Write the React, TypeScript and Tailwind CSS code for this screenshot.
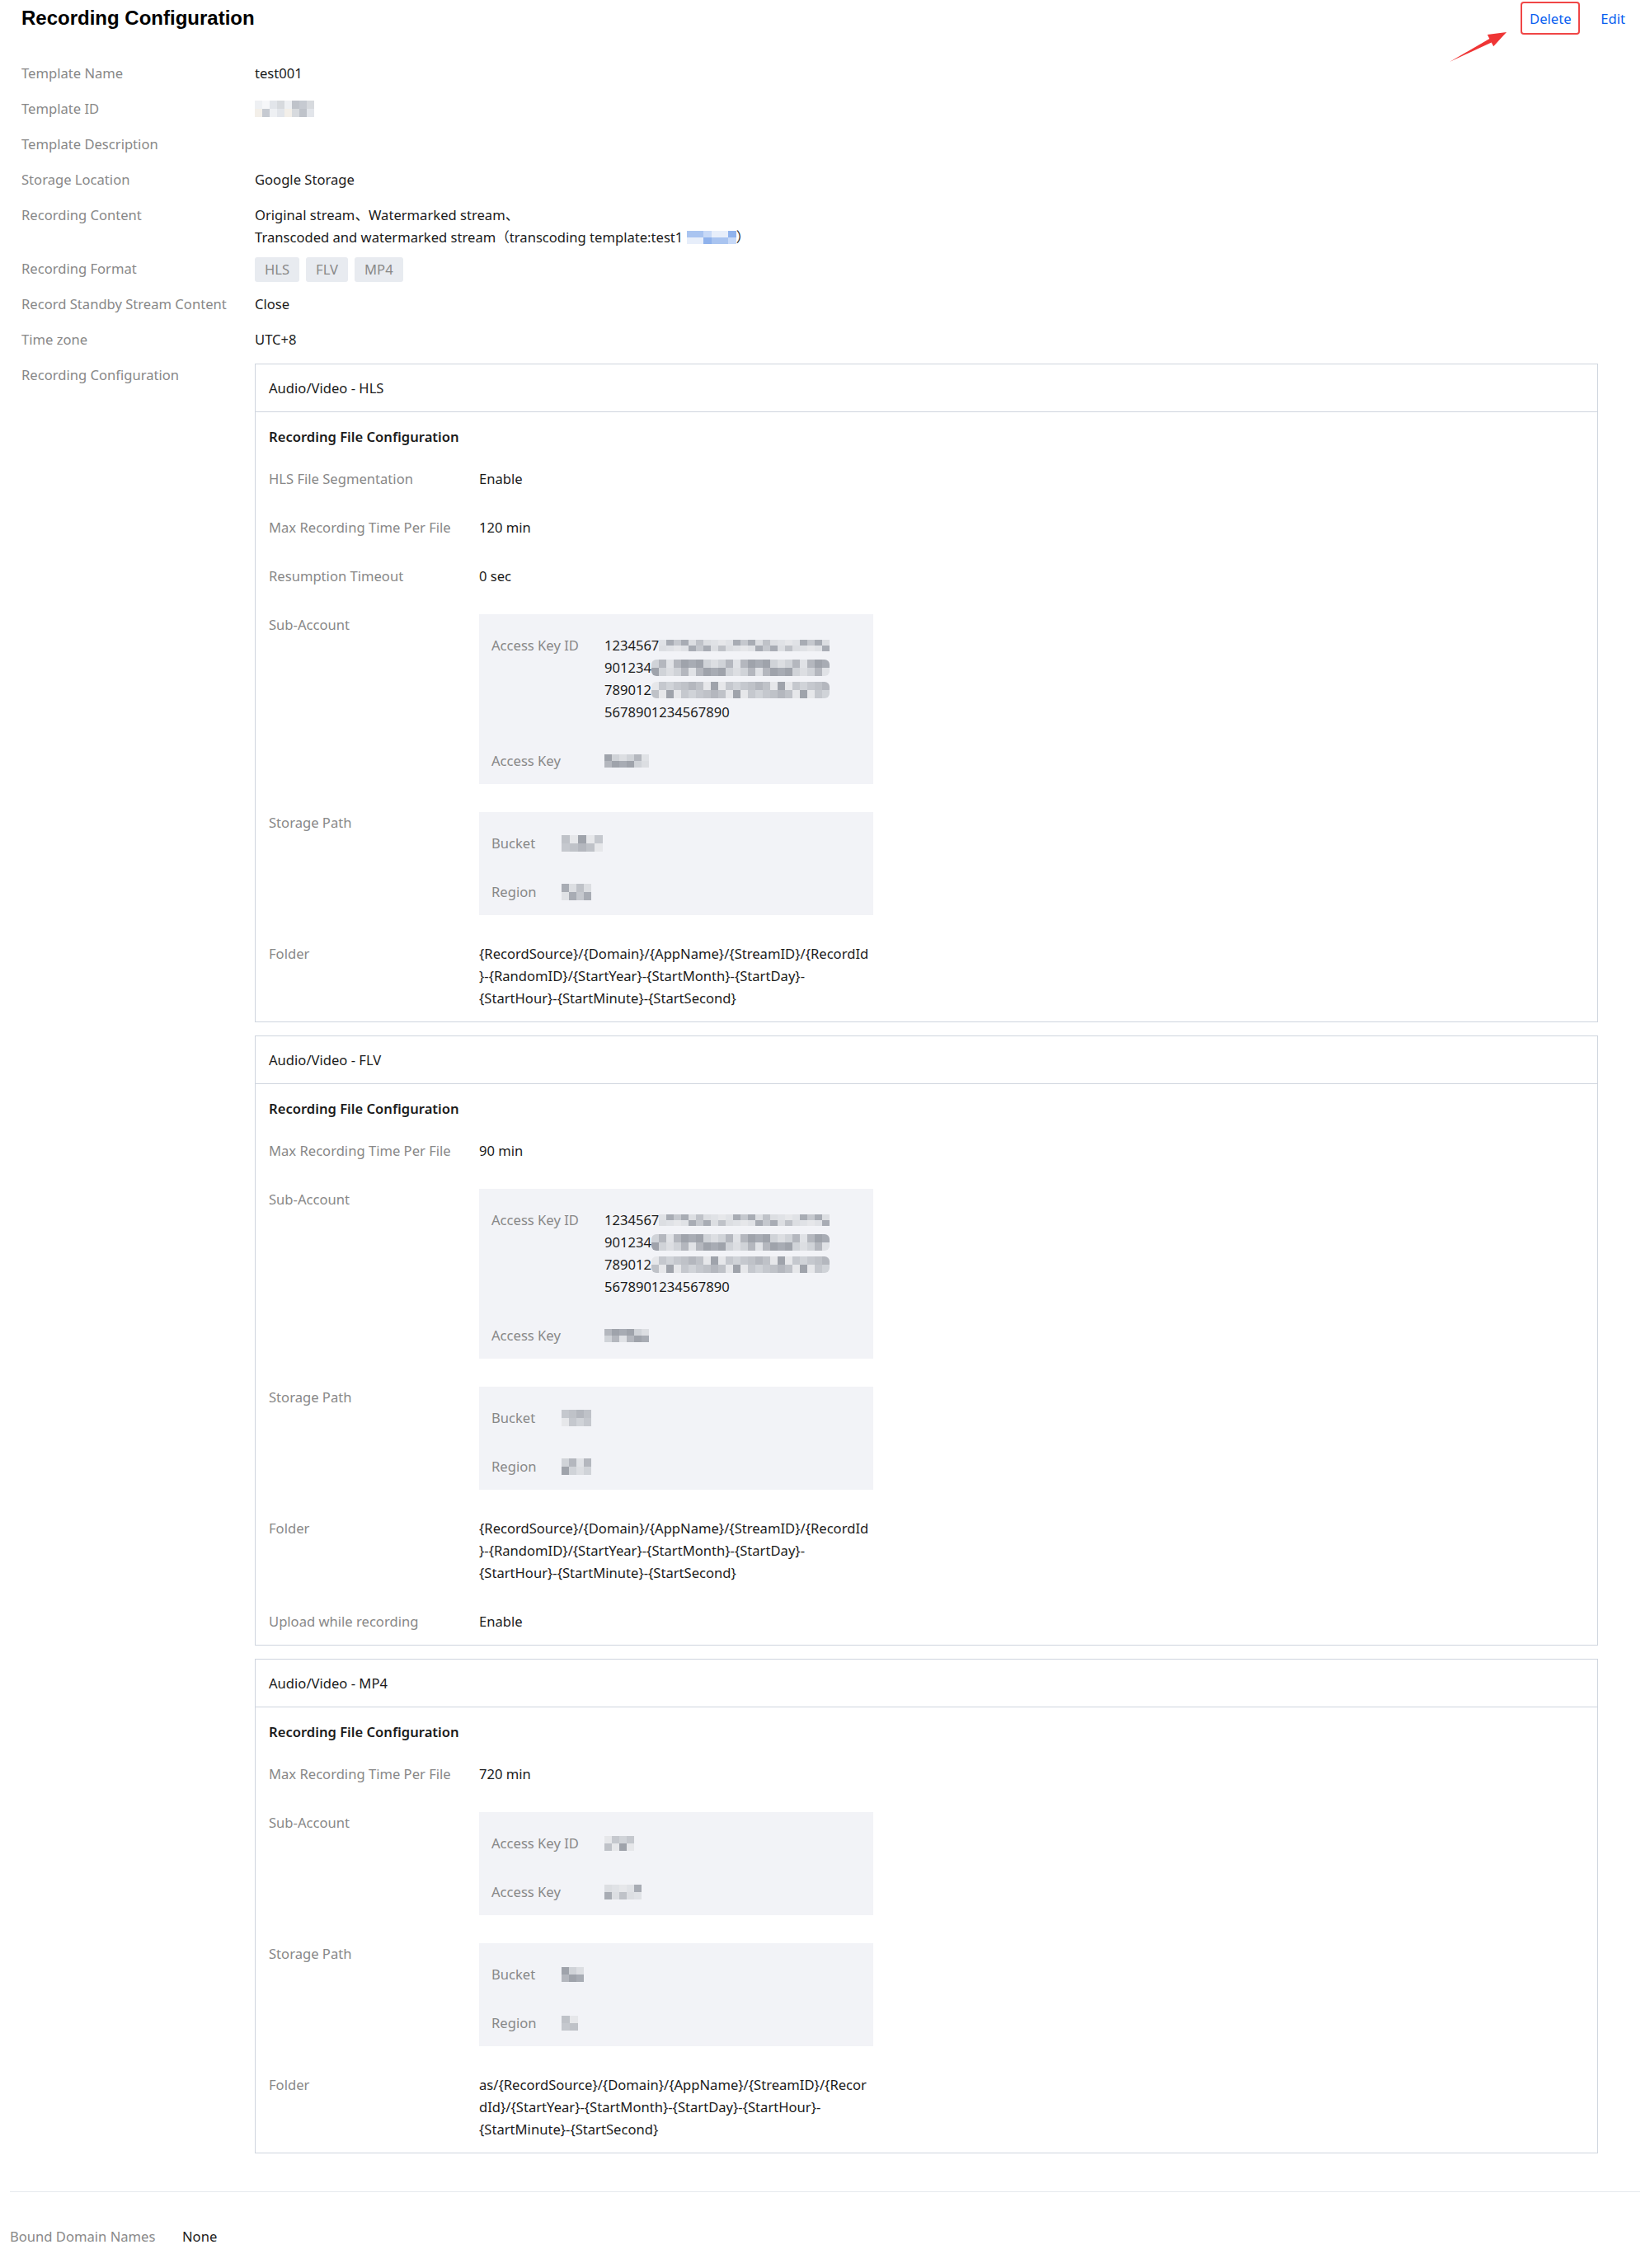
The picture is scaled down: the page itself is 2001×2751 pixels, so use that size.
import React from "react";

const greys = [
  "bg-[#c5c8ce]",
  "bg-[#dcdee2]",
  "bg-[#b4b7be]",
  "bg-[#e6e7ea]",
  "bg-[#a8acb4]",
  "bg-[#d0d3d8]",
  "bg-[#bfc2c8]",
  "bg-[#e0e2e6]",
  "bg-[#9fa3ab]",
];

const lights = [
  "bg-[#eef0f3]",
  "bg-[#d7dade]",
  "bg-[#c6cad1]",
  "bg-[#f3efe9]",
  "bg-[#e2e5ea]",
  "bg-[#bfc3ca]",
  "bg-[#f6f7f9]",
];

const blues = [
  "bg-[#c7d9f7]",
  "bg-[#a9c4f0]",
  "bg-[#dbe6f8]",
  "bg-[#8fb2ec]",
  "bg-[#e7eefa]",
  "bg-[#b8cff4]",
];

type MosaicProps = {
  cols: number;
  rows?: number;
  cell: string;
  palette?: string[];
  seed?: number;
  className?: string;
};

// pixelated blur used where the screenshot hides secrets
const Mosaic = ({ cols, rows = 2, cell, palette = greys, seed = 0, className = "" }: MosaicProps) => (
  <span className={`inline-flex flex-col align-middle ${className}`}>
    {Array.from({ length: rows }).map((_, r) => (
      <span key={r} className="flex">
        {Array.from({ length: cols }).map((_, c) => (
          <span
            key={c}
            className={`${cell} ${palette[(c * 5 + r * 3 + seed * 7 + ((c * c) % 3)) % palette.length]}`}
          />
        ))}
      </span>
    ))}
  </span>
);

const TopRow = ({ label, children, className = "py-[8px]" }: { label: string; children?: React.ReactNode; className?: string }) => (
  <div className={`flex ${className}`}>
    <div className="w-[283px] shrink-0 text-[#888888]">{label}</div>
    <div className="flex-1 min-w-0">{children}</div>
  </div>
);

const Field = ({ label, children }: { label: string; children?: React.ReactNode }) => (
  <div className="flex">
    <div className="w-[255px] shrink-0 text-[#888888]">{label}</div>
    <div>{children}</div>
  </div>
);

const GreyPanel = ({ children }: { children: React.ReactNode }) => (
  <div className="my-[1px] w-[478px] bg-[#f2f3f7] pl-[15px] pt-[24px] pb-[15px] grid grid-cols-[auto_1fr] gap-x-[31px] gap-y-[32px]">
    {children}
  </div>
);

const Box = ({ title, children }: { title: string; children: React.ReactNode }) => (
  <div className="border border-[#cfd5de]">
    <div className="h-[58px] border-b border-[#cfd5de] flex items-center pl-[16px]">{title}</div>
    <div className="pl-[16px] pt-[16px] pb-[15px]">
      <div className="font-semibold">Recording File Configuration</div>
      <div className="mt-[24px] flex flex-col gap-[32px]">{children}</div>
    </div>
  </div>
);

const KeyIdLong = () => (
  <div>
    <div className="flex items-center h-[27px]">
      <span>1234567</span>
      <Mosaic cols={23} cell="w-[9px] h-[7px]" seed={1} />
    </div>
    <div className="flex items-center h-[27px]">
      <span>901234</span>
      <Mosaic cols={24} cell="w-[9px] h-[10px]" seed={2} className="rounded-[6px] overflow-hidden" />
    </div>
    <div className="flex items-center h-[27px]">
      <span>789012</span>
      <Mosaic cols={24} cell="w-[9px] h-[10px]" seed={3} className="rounded-[6px] overflow-hidden" />
    </div>
    <div>5678901234567890</div>
  </div>
);

const FolderLines = ({ lines }: { lines: string[] }) => (
  <div>
    {lines.map((l) => (
      <div key={l} className="whitespace-nowrap">
        {l}
      </div>
    ))}
  </div>
);

const folderStd = [
  "{RecordSource}/{Domain}/{AppName}/{StreamID}/{RecordId",
  "}-{RandomID}/{StartYear}-{StartMonth}-{StartDay}-",
  "{StartHour}-{StartMinute}-{StartSecond}",
];

const folderMp4 = [
  "as/{RecordSource}/{Domain}/{AppName}/{StreamID}/{Recor",
  "dId}/{StartYear}-{StartMonth}-{StartDay}-{StartHour}-",
  "{StartMinute}-{StartSecond}",
];

const PanelLabel = ({ children }: { children: React.ReactNode }) => (
  <div className="text-[#888888]">{children}</div>
);

const MosaicCell = ({ children }: { children: React.ReactNode }) => (
  <div className="flex items-center h-[27px]">{children}</div>
);

export default function App() {
  return (
    <div className="relative min-h-screen bg-white font-['Noto_Sans','Noto_Sans_CJK_SC',sans-serif] text-[16.6px] leading-[27px] text-[#1b1b1b]">
      <div className="px-[12px]">
        {/* header */}
        <div className="h-[44px] flex items-center justify-between pl-[14px] pr-[18px]">
          <h1 className="font-['Liberation_Sans',Arial,sans-serif] text-[24px] font-bold text-black leading-[30px]">
            Recording Configuration
          </h1>
          <div className="flex items-center">
            <div className="w-[72px] h-[40px] flex items-center justify-center border-2 border-[#f04646] rounded-[4px] text-[#0a5ff0]">
              Delete
            </div>
            <div className="ml-[25px] text-[#0a5ff0]">Edit</div>
          </div>
        </div>

        {/* details */}
        <div className="mt-[23px] pl-[14px] pr-[51px]">
          <TopRow label="Template Name">test001</TopRow>
          <TopRow label="Template ID">
            <MosaicCell>
              <Mosaic cols={8} cell="w-[9px] h-[10px]" palette={lights} seed={4} />
            </MosaicCell>
          </TopRow>
          <TopRow label="Template Description" />
          <TopRow label="Storage Location">Google Storage</TopRow>
          <TopRow label="Recording Content">
            <div>Original stream、Watermarked stream、</div>
            <div className="flex items-center">
              <span>Transcoded and watermarked stream（transcoding template:test1&nbsp;</span>
              <Mosaic cols={6} cell="w-[10px] h-[8px]" palette={blues} seed={1} />
              <span>）</span>
            </div>
          </TopRow>
          <TopRow label="Recording Format" className="pt-[3px] pb-[5px]">
            <div className="flex gap-[8px]">
              {["HLS", "FLV", "MP4"].map((t) => (
                <span key={t} className="h-[30px] leading-[30px] px-[12px] rounded-[3px] bg-[#e8ebf0] text-[#888888]">
                  {t}
                </span>
              ))}
            </div>
          </TopRow>
          <TopRow label="Record Standby Stream Content">Close</TopRow>
          <TopRow label="Time zone">UTC+8</TopRow>
          <TopRow label="Recording Configuration">
            <div className="flex flex-col gap-[16px]">
              <Box title="Audio/Video - HLS">
                <Field label="HLS File Segmentation">Enable</Field>
                <Field label="Max Recording Time Per File">120 min</Field>
                <Field label="Resumption Timeout">0 sec</Field>
                <Field label="Sub-Account">
                  <GreyPanel>
                    <PanelLabel>Access Key ID</PanelLabel>
                    <KeyIdLong />
                    <PanelLabel>Access Key</PanelLabel>
                    <MosaicCell>
                      <Mosaic cols={6} cell="w-[9px] h-[8px]" seed={5} />
                    </MosaicCell>
                  </GreyPanel>
                </Field>
                <Field label="Storage Path">
                  <GreyPanel>
                    <PanelLabel>Bucket</PanelLabel>
                    <MosaicCell>
                      <Mosaic cols={5} cell="w-[10px] h-[10px]" seed={6} />
                    </MosaicCell>
                    <PanelLabel>Region</PanelLabel>
                    <MosaicCell>
                      <Mosaic cols={4} cell="w-[9px] h-[10px]" seed={7} />
                    </MosaicCell>
                  </GreyPanel>
                </Field>
                <Field label="Folder">
                  <FolderLines lines={folderStd} />
                </Field>
              </Box>

              <Box title="Audio/Video - FLV">
                <Field label="Max Recording Time Per File">90 min</Field>
                <Field label="Sub-Account">
                  <GreyPanel>
                    <PanelLabel>Access Key ID</PanelLabel>
                    <KeyIdLong />
                    <PanelLabel>Access Key</PanelLabel>
                    <MosaicCell>
                      <Mosaic cols={6} cell="w-[9px] h-[8px]" seed={8} />
                    </MosaicCell>
                  </GreyPanel>
                </Field>
                <Field label="Storage Path">
                  <GreyPanel>
                    <PanelLabel>Bucket</PanelLabel>
                    <MosaicCell>
                      <Mosaic cols={4} cell="w-[9px] h-[10px]" seed={9} />
                    </MosaicCell>
                    <PanelLabel>Region</PanelLabel>
                    <MosaicCell>
                      <Mosaic cols={4} cell="w-[9px] h-[10px]" seed={2} />
                    </MosaicCell>
                  </GreyPanel>
                </Field>
                <Field label="Folder">
                  <FolderLines lines={folderStd} />
                </Field>
                <Field label="Upload while recording">Enable</Field>
              </Box>

              <Box title="Audio/Video - MP4">
                <Field label="Max Recording Time Per File">720 min</Field>
                <Field label="Sub-Account">
                  <GreyPanel>
                    <PanelLabel>Access Key ID</PanelLabel>
                    <MosaicCell>
                      <Mosaic cols={4} cell="w-[9px] h-[9px]" seed={3} />
                    </MosaicCell>
                    <PanelLabel>Access Key</PanelLabel>
                    <MosaicCell>
                      <Mosaic cols={5} cell="w-[9px] h-[9px]" seed={4} />
                    </MosaicCell>
                  </GreyPanel>
                </Field>
                <Field label="Storage Path">
                  <GreyPanel>
                    <PanelLabel>Bucket</PanelLabel>
                    <MosaicCell>
                      <Mosaic cols={3} cell="w-[9px] h-[9px]" seed={5} />
                    </MosaicCell>
                    <PanelLabel>Region</PanelLabel>
                    <MosaicCell>
                      <Mosaic cols={2} cell="w-[10px] h-[9px]" seed={6} />
                    </MosaicCell>
                  </GreyPanel>
                </Field>
                <Field label="Folder">
                  <FolderLines lines={folderMp4} />
                </Field>
              </Box>
            </div>
          </TopRow>
        </div>

        {/* bound domains */}
        <div className="mt-[38px] border-t border-[#e6e9ee]" />
        <div className="mt-[40px] flex pb-[40px]">
          <div className="w-[209px] shrink-0 text-[#888888]">Bound Domain Names</div>
          <div>None</div>
        </div>
      </div>

      {/* red annotation arrow */}
      <svg className="absolute left-[1750px] top-[30px] w-[85px] h-[50px]" viewBox="0 0 85 50">
        <polygon points="8,45 56.3,17 53.8,12.1 77,9 61.2,26.3 58.7,21.4" fill="#ef3535" />
      </svg>
    </div>
  );
}
